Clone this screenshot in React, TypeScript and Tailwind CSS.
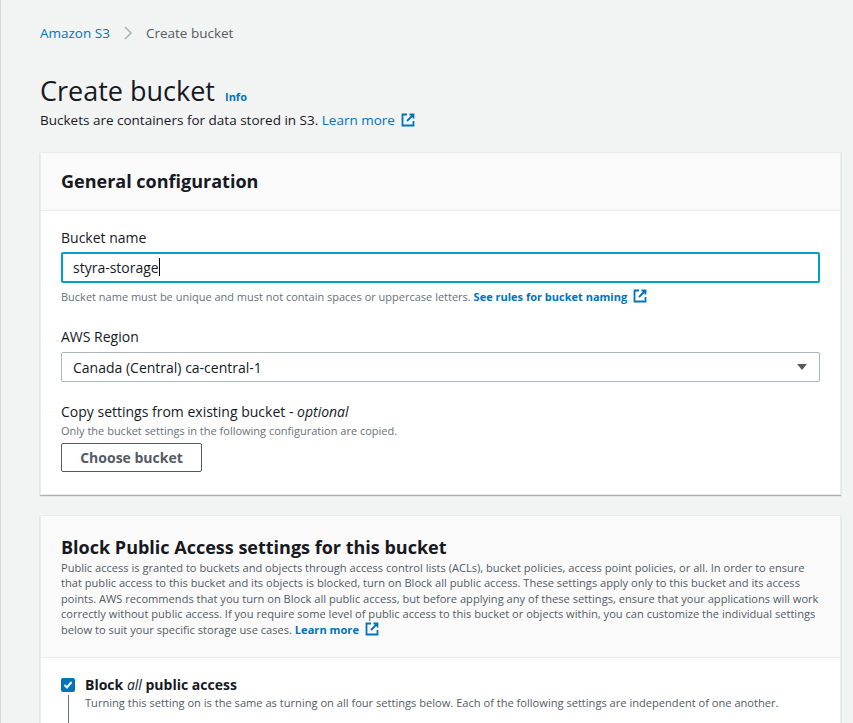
import React from "react";

const Ext = () => (
  <svg width="14" height="14" viewBox="0 0 14 14" className="inline-block ml-[6px] -mt-[3px]" fill="none" stroke="#0073bb" strokeWidth="1.8">
    <path d="M6 1.5H1.5v11h11V8" />
    <path d="M8.5 1.5h4v4M12.5 1.5L6 8" />
  </svg>
);

export default function App() {
  return (
    <div className="w-[853px] h-[723px] overflow-hidden bg-[#f2f3f3] border-l border-[#d5dbdb] text-[#16191f]" style={{ fontFamily: '"Open Sans", sans-serif' }}>
      <div className="pl-[39px] pr-[12px]">
        <div className="pt-[23px] flex items-center text-[13.5px]">
          <span className="text-[#0073bb]">Amazon S3</span>
          <svg width="10" height="14" viewBox="0 0 10 14" className="mx-[13px]" fill="none" stroke="#aab7b8" strokeWidth="1.6"><path d="M2 1l6 6-6 6" /></svg>
          <span className="text-[#545b64]">Create bucket</span>
        </div>
        <div className="mt-[31px] flex items-end">
          <h1 className="text-[27px] leading-[34px]">Create bucket</h1>
          <span className="ml-[10px] mb-[3px] text-[11px] font-bold text-[#0073bb]">Info</span>
        </div>
        <p className="text-[13.5px] mt-[2px]">Buckets are containers for data stored in S3. <span className="text-[#0073bb]">Learn more</span><Ext /></p>

        <div className="mt-[21px] bg-white border border-[#eaeded] shadow-[0_1px_1px_rgba(0,28,36,0.3)]">
          <div className="h-[58px] bg-[#fafafa] border-b border-[#eaeded] px-[20px] flex items-center">
            <h2 className="text-[18px] font-bold">General configuration</h2>
          </div>
          <div className="px-[20px] pt-[16px] pb-[22px]">
            <div className="text-[14px]">Bucket name</div>
            <div className="mt-[4px] h-[31px] border-2 border-[#00a1c9] rounded-[2px] flex items-center px-[10px] text-[14px]">styra-storage<span className="w-px h-[18px] bg-black" /></div>
            <p className="mt-[6px] text-[11px] text-[#687078]">Bucket name must be unique and must not contain spaces or uppercase letters. <span className="font-bold text-[#0073bb]">See rules for bucket naming</span><Ext /></p>
            <div className="mt-[21px] text-[14px]">AWS Region</div>
            <div className="mt-[5px] h-[30px] border border-[#aab7b8] rounded-[2px] flex items-center justify-between px-[11px] text-[14px]">
              <span>Canada (Central) ca-central-1</span>
              <svg width="12" height="8" viewBox="0 0 12 8"><path d="M1 1h10L6 7z" fill="#545b64" /></svg>
            </div>
            <div className="mt-[19px] text-[14px]">Copy settings from existing bucket - <i>optional</i></div>
            <div className="text-[11px] text-[#687078] mt-[1px]">Only the bucket settings in the following configuration are copied.</div>
            <button className="mt-[3px] h-[29px] w-[141px] border border-[#545b64] rounded-[2px] text-[14px] font-bold text-[#545b64] bg-white">Choose bucket</button>
          </div>
        </div>

        <div className="mt-[20px] bg-white border border-[#eaeded] shadow-[0_1px_1px_rgba(0,28,36,0.3)]">
          <div className="bg-[#fafafa] border-b border-[#eaeded] px-[20px] pt-[19px] pb-[20px]">
            <h2 className="text-[18px] font-bold leading-[24px]">Block Public Access settings for this bucket</h2>
            <p className="text-[11.1px] leading-[15.5px] text-[#545b64] mt-[1px]">Public access is granted to buckets and objects through access control lists (ACLs), bucket policies, access point policies, or all. In order to ensure that public access to this bucket and its objects is blocked, turn on Block all public access. These settings apply only to this bucket and its access points. AWS recommends that you turn on Block all public access, but before applying any of these settings, ensure that your applications will work correctly without public access. If you require some level of public access to this bucket or objects within, you can customize the individual settings below to suit your specific storage use cases. <span className="font-bold text-[#0073bb]">Learn more</span><Ext /></p>
          </div>
          <div className="px-[20px] pt-[16px] pb-[20px]">
            <div className="flex items-center">
              <div className="w-[14px] h-[14px] bg-[#0073bb] rounded-[2px] flex items-center justify-center">
                <svg width="10" height="10" viewBox="0 0 10 10" fill="none" stroke="white" strokeWidth="2"><path d="M1.5 5l2.5 2.5L8.5 2" /></svg>
              </div>
              <span className="ml-[10px] text-[14px] font-bold">Block <i className="font-normal">all</i> public access</span>
            </div>
            <div className="flex">
              <div className="ml-[7px] w-px h-[40px] bg-[#687078]" />
              <div className="ml-[16px] text-[11.1px] text-[#545b64]">Turning this setting on is the same as turning on all four settings below. Each of the following settings are independent of one another.</div>
            </div>
          </div>
        </div>
      </div>
    </div>
  );
}
